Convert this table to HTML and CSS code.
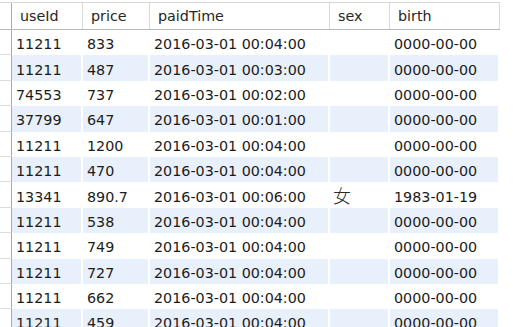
FILE: index.html
```
<!DOCTYPE html>
<html lang="en">

<head>
    <meta charset="UTF-8">
    <title>Result Grid</title>
    <link rel="stylesheet" href="styles.css">
</head>

<body>
    <div class="result-grid">
        <div class="grid-row grid-head">
            <div class="gutter"></div>
            <div class="head-cell">useId</div>
            <div class="head-cell">price</div>
            <div class="head-cell">paidTime</div>
            <div class="head-cell">sex</div>
            <div class="head-cell">birth</div>
        </div>

        <div class="grid-row">
            <div class="gutter"></div>
            <div class="cell">11211</div><div class="cell">833</div><div class="cell">2016-03-01 00:04:00</div><div class="cell"></div><div class="cell">0000-00-00</div>
        </div>
        <div class="grid-row alt">
            <div class="gutter"></div>
            <div class="cell">11211</div><div class="cell">487</div><div class="cell">2016-03-01 00:03:00</div><div class="cell"></div><div class="cell">0000-00-00</div>
        </div>
        <div class="grid-row">
            <div class="gutter"></div>
            <div class="cell">74553</div><div class="cell">737</div><div class="cell">2016-03-01 00:02:00</div><div class="cell"></div><div class="cell">0000-00-00</div>
        </div>
        <div class="grid-row alt">
            <div class="gutter"></div>
            <div class="cell">37799</div><div class="cell">647</div><div class="cell">2016-03-01 00:01:00</div><div class="cell"></div><div class="cell">0000-00-00</div>
        </div>
        <div class="grid-row">
            <div class="gutter"></div>
            <div class="cell">11211</div><div class="cell">1200</div><div class="cell">2016-03-01 00:04:00</div><div class="cell"></div><div class="cell">0000-00-00</div>
        </div>
        <div class="grid-row alt">
            <div class="gutter"></div>
            <div class="cell">11211</div><div class="cell">470</div><div class="cell">2016-03-01 00:04:00</div><div class="cell"></div><div class="cell">0000-00-00</div>
        </div>
        <div class="grid-row">
            <div class="gutter"></div>
            <div class="cell">13341</div><div class="cell">890.7</div><div class="cell">2016-03-01 00:06:00</div><div class="cell cjk">女</div><div class="cell">1983-01-19</div>
        </div>
        <div class="grid-row alt">
            <div class="gutter"></div>
            <div class="cell">11211</div><div class="cell">538</div><div class="cell">2016-03-01 00:04:00</div><div class="cell"></div><div class="cell">0000-00-00</div>
        </div>
        <div class="grid-row">
            <div class="gutter"></div>
            <div class="cell">11211</div><div class="cell">749</div><div class="cell">2016-03-01 00:04:00</div><div class="cell"></div><div class="cell">0000-00-00</div>
        </div>
        <div class="grid-row alt">
            <div class="gutter"></div>
            <div class="cell">11211</div><div class="cell">727</div><div class="cell">2016-03-01 00:04:00</div><div class="cell"></div><div class="cell">0000-00-00</div>
        </div>
        <div class="grid-row">
            <div class="gutter"></div>
            <div class="cell">11211</div><div class="cell">662</div><div class="cell">2016-03-01 00:04:00</div><div class="cell"></div><div class="cell">0000-00-00</div>
        </div>
        <div class="grid-row alt">
            <div class="gutter"></div>
            <div class="cell">11211</div><div class="cell">459</div><div class="cell">2016-03-01 00:04:00</div><div class="cell"></div><div class="cell">0000-00-00</div>
        </div>
    </div>
</body>

</html>
```

FILE: styles.css
```
* {
    margin: 0;
    padding: 0;
    box-sizing: border-box;
}

body {
    font-family: "DejaVu Sans", Verdana, sans-serif;
    font-size: 14.3px;
    color: #1b1b1b;
    background-color: #fff;
    overflow: hidden;
}

.result-grid {
    width: 500px;
    padding-top: 2px;
}

.grid-row {
    display: grid;
    grid-template-columns: 12px 71px 67px 180px 60px 110px;
    height: 25.4px;
}

/* header */
.grid-head {
    height: 28px;
    border-top: 1px solid #d6d6d6;
    border-bottom: 1px solid #b9b9b9;
}

.head-cell {
    display: flex;
    align-items: center;
    padding-left: 8px;
    color: #262626;
    border-right: 1px solid #dadada;
    white-space: nowrap;
}

/* row number column on the left */
.gutter {
    border-right: 1px solid #a9a9a9;
    border-bottom: 1px solid #dcdcdc;
}

.grid-head .gutter {
    border-bottom: none;
}

.cell {
    display: flex;
    align-items: center;
    padding: 3px 0 0 4px;
    border-right: 2px solid #fff;
    white-space: nowrap;
    overflow: hidden;
}

.alt .cell {
    background-color: #e8f0fb;
}

.cjk {
    font-family: "Noto Sans CJK SC", sans-serif;
    font-size: 18px;
    font-weight: 300;
    color: #2a2a2a;
    padding: 0 0 0 3px;
    overflow: visible;
}
```
